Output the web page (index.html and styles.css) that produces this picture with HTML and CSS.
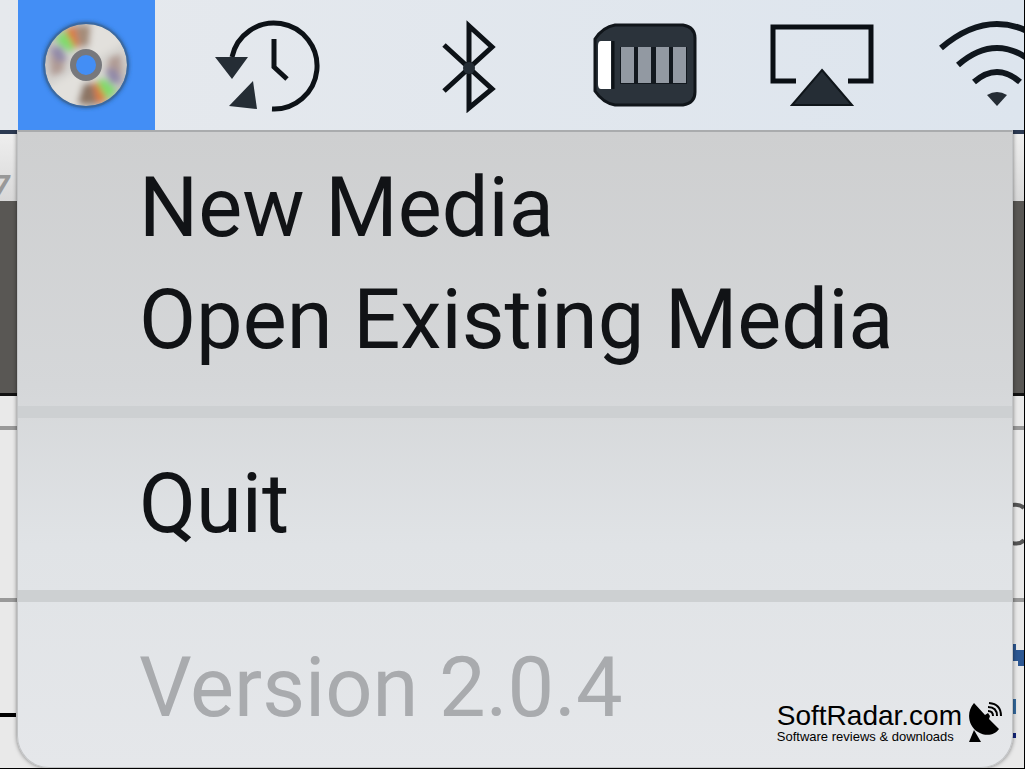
FILE: index.html
```html
<!DOCTYPE html>
<html lang="en">
<head>
    <meta charset="UTF-8">
    <meta name="viewport" content="width=device-width, initial-scale=1.0">
    <title>Media Menu</title>
    <link rel="stylesheet" href="styles.css">
</head>
<body>
    <div class="screen">
        <header class="menubar">
            <button type="button" class="status active" aria-label="Media">
                <svg width="92" height="94" viewBox="0 0 92 94">
                    <defs>
                        <linearGradient id="disc" x1="0" y1="0" x2="1" y2="1">
                            <stop offset="0" stop-color="#b9b6b4"/>
                            <stop offset="0.35" stop-color="#d3d1ce"/>
                            <stop offset="0.65" stop-color="#d6d4d0"/>
                            <stop offset="1" stop-color="#b5b2b0"/>
                        </linearGradient>
                        <filter id="soft" x="-20%" y="-20%" width="140%" height="140%"><feGaussianBlur stdDeviation="2"/></filter>
                        <filter id="softer" x="-20%" y="-20%" width="140%" height="140%"><feGaussianBlur stdDeviation="3"/></filter>
                        <clipPath id="round"><circle cx="45" cy="47" r="41"/></clipPath>
                    </defs>
                    <circle cx="45" cy="47" r="43" fill="#2c5b95" filter="url(#soft)"/>
                    <circle cx="45" cy="47" r="41" fill="url(#disc)"/>
                    <g clip-path="url(#round)">
                        <g filter="url(#softer)">
                            <path d="M45 47 52 0 90 20z" fill="#e2e0dc"/>
                            <path d="M45 47 38 94 0 74z" fill="#e2e0dc"/>
                            <path d="M9 36 24 42 22 54 10 58z" fill="#b09b94"/>
                            <path d="M8 30 20 28 26 42 16 44z" fill="#9189a8"/>
                            <path d="M14 22 24 12 36 28 28 34z" fill="#7fdc6c"/>
                            <path d="M24 12 34 8 38 28 34 30z" fill="#dd7a42"/>
                            <path d="M34 8 50 8 48 28 38 28z" fill="#a48c79"/>
                            <path d="M81 58 66 52 68 40 80 36z" fill="#b09b94"/>
                            <path d="M82 64 70 66 64 52 74 50z" fill="#9189a8"/>
                            <path d="M76 72 66 82 54 66 62 60z" fill="#7fdc6c"/>
                            <path d="M66 82 56 86 52 66 56 64z" fill="#dd7a42"/>
                            <path d="M56 86 36 86 42 66 52 66z" fill="#8c7564"/>
                        </g>
                    </g>
                    <circle cx="45" cy="47" r="13" fill="#438ef5" stroke="#77787c" stroke-width="6"/>
                    <circle cx="45" cy="47" r="42" fill="none" stroke="#3f6796" stroke-width="2" opacity="0.6"/>
                </svg>
            </button>
            <button type="button" class="status wide" aria-label="Time Machine">
                <svg width="106" height="96" viewBox="0 0 106 96">
                    <path d="M17 40A43 43 0 1 1 57 92" fill="none" stroke="#0d1217" stroke-width="5"/>
                    <path d="M59 22V50L72 62" fill="none" stroke="#0d1217" stroke-width="5"/>
                    <path d="M0 40H33L17 62zM14 89 38 64 42 92z" fill="#252d35"/>
                </svg>
            </button>
            <button type="button" class="status" aria-label="Bluetooth">
                <svg width="54" height="96" viewBox="0 0 54 96">
                    <path d="M2 28 50 72 27 91V9L50 30 2 74" fill="none" stroke="#0d1217" stroke-width="5"/>
                    <circle cx="27" cy="51" r="6" fill="#252d35"/>
                </svg>
            </button>
            <button type="button" class="status" aria-label="Battery">
                <svg width="104" height="84" viewBox="0 0 104 84">
                    <path d="M22 2H90Q102 4 102 15V69Q102 80 90 82H22Q10 80 2 68V16Q10 4 22 2z" fill="#2b333b" stroke="#10151a" stroke-width="3"/>
                    <path d="M8 18H18V66H8Q5 66 5 61V23Q5 18 8 18z" fill="#fff"/>
                    <path d="M20 18V66" stroke="#0d1217" stroke-width="3"/>
                    <path d="M27 24H94V61H27z" fill="#12181e"/>
                    <path d="M28 24H41V60H28zM45 24H58V60H45zM63 24H76V60H63zM80 24H93V60H80z" fill="#9299a2"/>
                </svg>
            </button>
            <button type="button" class="status" aria-label="AirPlay">
                <svg width="106" height="84" viewBox="0 0 106 84">
                    <path d="M28 58H5V4H103V58H80" fill="none" stroke="#0a0f14" stroke-width="5"/>
                    <path d="M54 47 84 82H24z" fill="#252d35" stroke="#0f151a" stroke-width="2"/>
                </svg>
            </button>
            <button type="button" class="status" aria-label="Wi-Fi">
                <svg width="116" height="90" viewBox="0 0 116 90">
                    <g fill="none" stroke="#10171e" stroke-width="6">
                        <path d="M2 28Q58-20 114 28"/>
                        <path d="M19 45Q58 11 97 45"/>
                        <path d="M35 62Q58 42 81 62"/>
                    </g>
                    <path d="M48 75Q58 69 68 75L58 86z" fill="#252d35"/>
                </svg>
            </button>
        </header>

        <main class="desktop">
            <div class="edge"></div>
            <div class="toolbar"><span>7</span></div>
            <div class="band"></div>
            <div class="row short"></div>
            <div class="row tall">
                <svg width="12" height="46" viewBox="0 0 12 46">
                    <path d="M0 3Q8 2 12 6M0 41Q8 43 12 38" fill="none" stroke="#555" stroke-width="4"/>
                </svg>
            </div>
            <div class="row last">
                <svg width="12" height="98" viewBox="0 0 12 98">
                    <path d="M0 0H4V6H12V22H6V17H0z" fill="#2c5792"/>
                    <path d="M0 55H4V70H0z" fill="#356b9f"/>
                    <path d="M0 89H4V94H0z" fill="#14267c"/>
                </svg>
            </div>

            <nav class="menu">
                <button type="button">New Media</button>
                <button type="button">Open Existing Media</button>
                <hr>
                <button type="button">Quit</button>
                <hr>
                <button type="button" disabled>Version 2.0.4</button>
            </nav>

            <div class="watermark">
                <div>
                    <div class="brand">SoftRadar.com</div>
                    <div class="tagline">Software reviews &amp; downloads</div>
                </div>
                <svg width="34" height="42" viewBox="0 0 34 42">
                    <path d="M6 1 17 13 20 11 22 14 21 17 31 27C27 33 18 35 10 30C0 24-2 10 6 1z" fill="#000"/>
                    <path d="M6 28 13 40H1z" fill="#000"/>
                    <path d="M20 9Q25 9 25 14M20 5Q29 5 29 14M21 1Q33 2 33 14" fill="none" stroke="#000" stroke-width="2"/>
                </svg>
            </div>
        </main>
    </div>
</body>
</html>
```
FILE: styles.css
```css
* {
    box-sizing: border-box;
}
body {
    margin: 0;
    background-color: #000;
    font-family: Roboto, sans-serif;
}
button {
    padding: 0;
    border: none;
    background: none;
    font: inherit;
    color: inherit;
}

/* menu bar */
.screen {
    display: flex;
    flex-direction: column;
    height: 100vh;
    border-right: 1px solid #000;
    border-bottom: 1px solid #000;
    overflow: hidden;
}
.menubar {
    display: flex;
    flex: none;
    height: 130px;
    padding-left: 18px;
    background: linear-gradient(90deg, #e6e9ed, #dde5ee);
    overflow: hidden;
}
.status {
    display: flex;
    flex: none;
    align-items: center;
    justify-content: center;
    width: 176px;
}
.status.active {
    width: 137px;
    background-color: #438ef5;
}
.status.wide {
    width: 226px;
}

/* window behind the menu */
.desktop {
    display: flex;
    flex-direction: column;
    flex: 1;
    position: relative;
    background-color: #e9e9e9;
    overflow: hidden;
}
.edge {
    flex: none;
    height: 4px;
    background-color: #2c3a52;
}
.toolbar {
    flex: none;
    height: 67px;
    padding-top: 36px;
    background: linear-gradient(#eee, #d8d8d8);
    color: #999;
    font-size: 32px;
    font-style: italic;
    font-weight: bold;
    line-height: 32px;
}
.toolbar span {
    margin-left: -8px;
}
.band {
    flex: none;
    height: 195px;
    background-color: #595754;
    border-bottom: 3px solid #111;
}
.row {
    display: flex;
    flex: none;
    justify-content: flex-end;
    border-bottom: 4px solid #999;
}
.row svg {
    flex: none;
}
.short {
    height: 34px;
}
.tall {
    height: 172px;
    padding-top: 72px;
}
.last {
    height: 166px;
    padding-top: 42px;
    border-bottom: none;
    background: linear-gradient(#000, #000) 0 111px / 16px 4px no-repeat;
}

/* drop-down */
.menu {
    position: absolute;
    top: 0;
    bottom: 0;
    left: 17px;
    right: 11px;
    padding-top: 20px;
    background: linear-gradient(#cecfd0, #d5d7d9 40%, #e0e3e6 65%, #e5e7ea);
    border: 1px solid #c1c3c5;
    border-top: 2px solid #a9abad;
    border-radius: 0 0 32px 32px;
    box-shadow: 0 0 4px rgba(0,0,0,0.5);
    color: #111316;
    font-size: 83px;
    line-height: 112px;
}
.menu button {
    display: block;
    width: 100%;
    padding-left: 121px;
    text-align: left;
    white-space: nowrap;
}
.menu button:disabled {
    color: #a9abae;
}
.menu hr {
    height: 12px;
    margin: 30px 0;
    border: none;
    background-color: #cdd0d2;
}

.watermark {
    display: flex;
    gap: 6px;
    position: absolute;
    right: 22px;
    bottom: 24px;
    color: #000;
    font-family: "Liberation Sans", Arial, sans-serif;
}
.brand {
    font-size: 28px;
    line-height: 28px;
}
.tagline {
    font-size: 13px;
    line-height: 14px;
}
```
